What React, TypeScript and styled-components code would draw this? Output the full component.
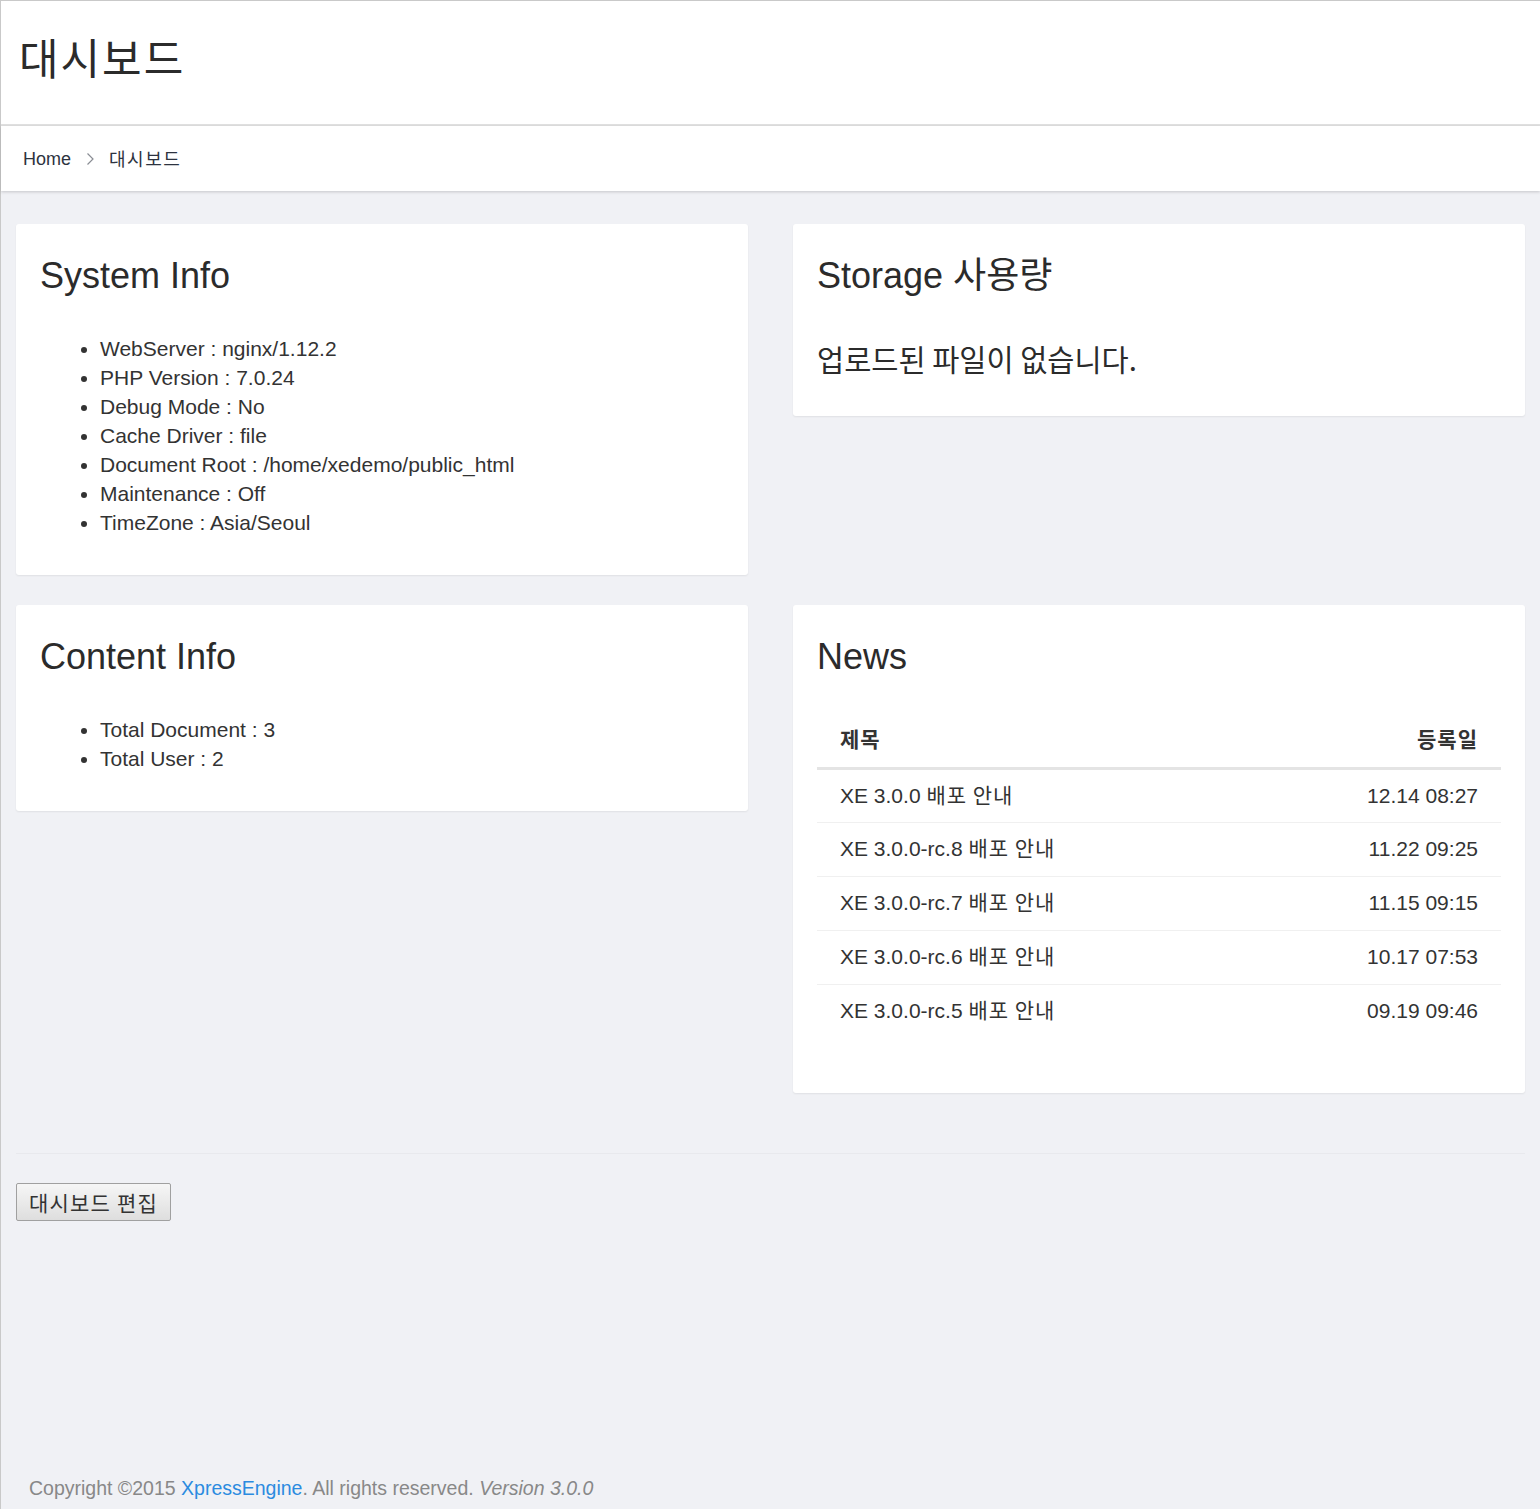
import React from "react";
import styled, { createGlobalStyle } from "styled-components";

const Global = createGlobalStyle`
  html, body { margin: 0; padding: 0; }
  body {
    background: #f0f1f5;
    font-family: "Liberation Sans", Arial, "Noto Sans CJK KR", sans-serif;
    color: #333;
  }
  * { box-sizing: border-box; }
`;

const Page = styled.div`
  min-height: 100vh;
  border-top: 1px solid #c9c9c9;
  border-left: 1px solid #c9c9c9;
  display: flex;
  flex-direction: column;
`;

const Header = styled.header`
  height: 125px;
  background: #fff;
  border-bottom: 2px solid #e1e1e1;
  display: flex;
  align-items: center;
  padding: 0 0 14px 18px;
`;

const Title = styled.h1`
  margin: 0;
  font-family: "Noto Sans CJK KR", sans-serif;
  font-weight: 400;
  font-size: 43px;
  letter-spacing: 2px;
  color: #2b2b2b;
`;

const Crumbs = styled.nav`
  height: 65px;
  background: #fff;
  display: flex;
  align-items: center;
  gap: 14px;
  padding: 0 0 0 22px;
  box-shadow: 0 1px 3px rgba(0, 0, 0, 0.18);
  position: relative;
  z-index: 1;
`;

const Crumb = styled.span<{ $ko?: boolean }>`
  font-size: 18px;
  letter-spacing: ${(p) => (p.$ko ? "1.5px" : "0")};
  font-family: ${(p) =>
    p.$ko ? `"Noto Sans CJK KR", sans-serif` : `"Liberation Sans", Arial, sans-serif`};
  color: #2d3340;
  position: relative;
  top: ${(p) => (p.$ko ? "-1px" : "1px")};
`;

const Main = styled.main`
  padding: 33px 15px 0 15px;
`;

const Grid = styled.div`
  display: grid;
  grid-template-columns: 732px 732px;
  column-gap: 45px;
  row-gap: 30px;
  align-items: start;
`;

const Card = styled.section`
  background: #fff;
  border-radius: 3px;
  box-shadow: 0 1px 2px rgba(0, 0, 0, 0.07);
  padding: 24px;
`;

const CardTitle = styled.h2`
  margin: 8px 0 38px;
  font-size: 36px;
  line-height: 40px;
  font-weight: 400;
  color: #2b2b2b;
  font-family: "Liberation Sans", Arial, "Noto Sans CJK KR", sans-serif;
`;

const InfoList = styled.ul`
  margin: 0 0 14px;
  padding-left: 60px;
  font-size: 21px;
  line-height: 29px;
  color: #333;
`;

const Empty = styled.p`
  margin: 42px 0 14px;
  font-family: "Noto Sans CJK KR", sans-serif;
  font-size: 29.5px;
  line-height: 40px;
  color: #2b2b2b;
`;

const Table = styled.table`
  width: 100%;
  border-collapse: collapse;
  margin: -2px 0 30px;
  font-size: 21px;
  font-family: "Liberation Sans", Arial, "Noto Sans CJK KR", sans-serif;
`;

const Th = styled.th<{ $right?: boolean }>`
  text-align: ${(p) => (p.$right ? "right" : "left")};
  font-family: "Noto Sans CJK KR", sans-serif;
  font-weight: 700;
  font-size: 21px;
  letter-spacing: 1px;
  color: #333;
  padding: 10px 23px 13px;
  height: 55px;
  border-bottom: 3px solid #e4e4e4;
`;

const Td = styled.td<{ $right?: boolean }>`
  text-align: ${(p) => (p.$right ? "right" : "left")};
  padding: 0 23px;
  height: 54px;
  color: #333;
  border-bottom: 1px solid #f0f0f0;
`;

const Row = styled.tr<{ $last?: boolean }>`
  & > td {
    border-bottom-color: ${(p) => (p.$last ? "transparent" : "#f0f0f0")};
  }
`;

const Ko = styled.span<{ $spaced?: boolean }>`
  font-family: "Noto Sans CJK KR", sans-serif;
  line-height: 0;
  letter-spacing: ${(p) => (p.$spaced ? "1px" : "0")};
`;

const Divider = styled.hr`
  margin: 60px 0 29px;
  border: 0;
  border-top: 1px solid #e8e9ed;
`;

const EditButton = styled.button`
  height: 38px;
  padding: 0 12px;
  font-family: "Noto Sans CJK KR", sans-serif;
  font-size: 21px;
  letter-spacing: 1.2px;
  color: #333;
  border: 1px solid #a0a0a0;
  border-radius: 2px;
  background: linear-gradient(#f6f6f6, #dedede);
  cursor: pointer;
`;

const Footer = styled.footer`
  margin-top: auto;
  padding: 0 28px 9px;
  font-size: 19.5px;
  line-height: 24px;
  color: #888;
`;

const Link = styled.a`
  color: #2b8be0;
  text-decoration: none;
`;

const Version = styled.em`
  color: #888;
`;

const Chevron = () => (
  <svg width="10" height="14" viewBox="0 0 10 14" aria-hidden="true">
    <path d="M2.5 1.5 L8 7 L2.5 12.5" fill="none" stroke="#8a8d94" strokeWidth="1.2" />
  </svg>
);

const news = [
  ["XE 3.0.0", "12.14 08:27"],
  ["XE 3.0.0-rc.8", "11.22 09:25"],
  ["XE 3.0.0-rc.7", "11.15 09:15"],
  ["XE 3.0.0-rc.6", "10.17 07:53"],
  ["XE 3.0.0-rc.5", "09.19 09:46"],
];

export default function App() {
  return (
    <>
      <Global />
      <Page>
        <Header>
          <Title>대시보드</Title>
        </Header>
        <Crumbs>
          <Crumb>Home</Crumb>
          <Chevron />
          <Crumb $ko>대시보드</Crumb>
        </Crumbs>
        <Main>
          <Grid>
            <Card>
              <CardTitle>System Info</CardTitle>
              <InfoList>
                <li>WebServer : nginx/1.12.2</li>
                <li>PHP Version : 7.0.24</li>
                <li>Debug Mode : No</li>
                <li>Cache Driver : file</li>
                <li>Document Root : /home/xedemo/public_html</li>
                <li>Maintenance : Off</li>
                <li>TimeZone : Asia/Seoul</li>
              </InfoList>
            </Card>
            <Card>
              <CardTitle>
                Storage <Ko>사용량</Ko>
              </CardTitle>
              <Empty>업로드된 파일이 없습니다.</Empty>
            </Card>
            <Card>
              <CardTitle>Content Info</CardTitle>
              <InfoList>
                <li>Total Document : 3</li>
                <li>Total User : 2</li>
              </InfoList>
            </Card>
            <Card>
              <CardTitle>News</CardTitle>
              <Table>
                <thead>
                  <tr>
                    <Th>제목</Th>
                    <Th $right>등록일</Th>
                  </tr>
                </thead>
                <tbody>
                  {news.map(([t, d], i) => (
                    <Row key={t} $last={i === news.length - 1}>
                      <Td>
                        {t} <Ko $spaced>배포 안내</Ko>
                      </Td>
                      <Td $right>{d}</Td>
                    </Row>
                  ))}
                </tbody>
              </Table>
            </Card>
          </Grid>
          <Divider />
          <EditButton type="button">대시보드 편집</EditButton>
        </Main>
        <Footer>
          Copyright ©2015 <Link href="#">XpressEngine</Link>. All rights reserved.{" "}
          <Version>Version 3.0.0</Version>
        </Footer>
      </Page>
    </>
  );
}
